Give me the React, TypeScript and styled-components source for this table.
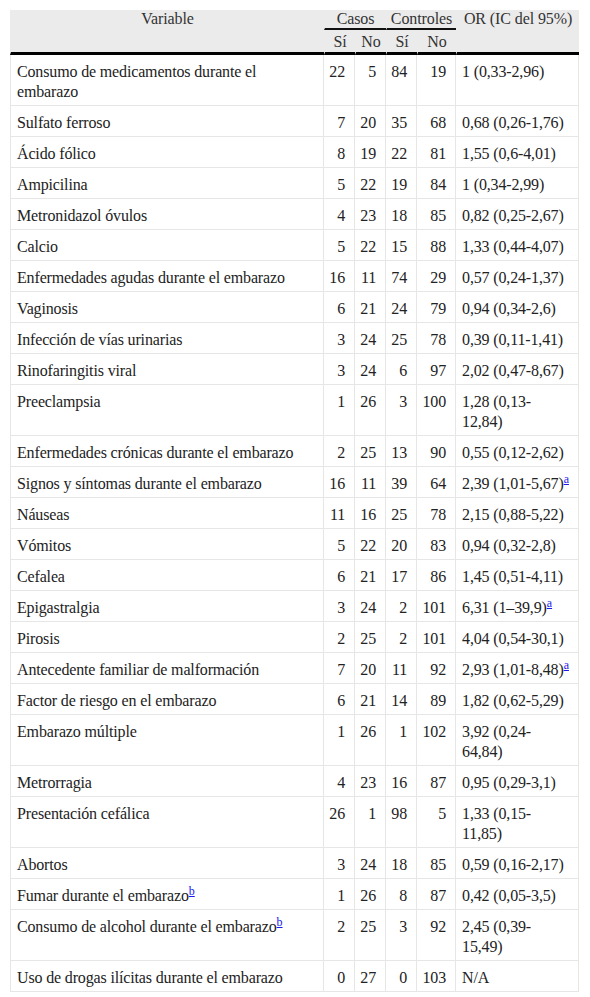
import React from 'react';
import styled, { createGlobalStyle } from 'styled-components';

/*
 * Types
*/
type Row = {
    variable: string;
    note?: string;
    casosSi: number;
    casosNo: number;
    controlesSi: number;
    controlesNo: number;
    or: string;
    orNote?: string;
};

/*
 * Data
*/
const rows: Row[] = [
    { variable: 'Consumo de medicamentos durante el embarazo', casosSi: 22, casosNo: 5, controlesSi: 84, controlesNo: 19, or: '1 (0,33-2,96)' },
    { variable: 'Sulfato ferroso', casosSi: 7, casosNo: 20, controlesSi: 35, controlesNo: 68, or: '0,68 (0,26-1,76)' },
    { variable: 'Ácido fólico', casosSi: 8, casosNo: 19, controlesSi: 22, controlesNo: 81, or: '1,55 (0,6-4,01)' },
    { variable: 'Ampicilina', casosSi: 5, casosNo: 22, controlesSi: 19, controlesNo: 84, or: '1 (0,34-2,99)' },
    { variable: 'Metronidazol óvulos', casosSi: 4, casosNo: 23, controlesSi: 18, controlesNo: 85, or: '0,82 (0,25-2,67)' },
    { variable: 'Calcio', casosSi: 5, casosNo: 22, controlesSi: 15, controlesNo: 88, or: '1,33 (0,44-4,07)' },
    { variable: 'Enfermedades agudas durante el embarazo', casosSi: 16, casosNo: 11, controlesSi: 74, controlesNo: 29, or: '0,57 (0,24-1,37)' },
    { variable: 'Vaginosis', casosSi: 6, casosNo: 21, controlesSi: 24, controlesNo: 79, or: '0,94 (0,34-2,6)' },
    { variable: 'Infección de vías urinarias', casosSi: 3, casosNo: 24, controlesSi: 25, controlesNo: 78, or: '0,39 (0,11-1,41)' },
    { variable: 'Rinofaringitis viral', casosSi: 3, casosNo: 24, controlesSi: 6, controlesNo: 97, or: '2,02 (0,47-8,67)' },
    { variable: 'Preeclampsia', casosSi: 1, casosNo: 26, controlesSi: 3, controlesNo: 100, or: '1,28 (0,13-12,84)' },
    { variable: 'Enfermedades crónicas durante el embarazo', casosSi: 2, casosNo: 25, controlesSi: 13, controlesNo: 90, or: '0,55 (0,12-2,62)' },
    { variable: 'Signos y síntomas durante el embarazo', casosSi: 16, casosNo: 11, controlesSi: 39, controlesNo: 64, or: '2,39 (1,01-5,67)', orNote: 'a' },
    { variable: 'Náuseas', casosSi: 11, casosNo: 16, controlesSi: 25, controlesNo: 78, or: '2,15 (0,88-5,22)' },
    { variable: 'Vómitos', casosSi: 5, casosNo: 22, controlesSi: 20, controlesNo: 83, or: '0,94 (0,32-2,8)' },
    { variable: 'Cefalea', casosSi: 6, casosNo: 21, controlesSi: 17, controlesNo: 86, or: '1,45 (0,51-4,11)' },
    { variable: 'Epigastralgia', casosSi: 3, casosNo: 24, controlesSi: 2, controlesNo: 101, or: '6,31 (1–39,9)', orNote: 'a' },
    { variable: 'Pirosis', casosSi: 2, casosNo: 25, controlesSi: 2, controlesNo: 101, or: '4,04 (0,54-30,1)' },
    { variable: 'Antecedente familiar de malformación', casosSi: 7, casosNo: 20, controlesSi: 11, controlesNo: 92, or: '2,93 (1,01-8,48)', orNote: 'a' },
    { variable: 'Factor de riesgo en el embarazo', casosSi: 6, casosNo: 21, controlesSi: 14, controlesNo: 89, or: '1,82 (0,62-5,29)' },
    { variable: 'Embarazo múltiple', casosSi: 1, casosNo: 26, controlesSi: 1, controlesNo: 102, or: '3,92 (0,24-64,84)' },
    { variable: 'Metrorragia', casosSi: 4, casosNo: 23, controlesSi: 16, controlesNo: 87, or: '0,95 (0,29-3,1)' },
    { variable: 'Presentación cefálica', casosSi: 26, casosNo: 1, controlesSi: 98, controlesNo: 5, or: '1,33 (0,15-11,85)' },
    { variable: 'Abortos', casosSi: 3, casosNo: 24, controlesSi: 18, controlesNo: 85, or: '0,59 (0,16-2,17)' },
    { variable: 'Fumar durante el embarazo', note: 'b', casosSi: 1, casosNo: 26, controlesSi: 8, controlesNo: 87, or: '0,42 (0,05-3,5)' },
    { variable: 'Consumo de alcohol durante el embarazo', note: 'b', casosSi: 2, casosNo: 25, controlesSi: 3, controlesNo: 92, or: '2,45 (0,39-15,49)' },
    { variable: 'Uso de drogas ilícitas durante el embarazo', casosSi: 0, casosNo: 27, controlesSi: 0, controlesNo: 103, or: 'N/A' },
];

/*
 * Styling
*/
const GlobalStyle = createGlobalStyle`
    body {
        margin: 0;
        background: #ffffff;
        font-family: "Liberation Serif", "Times New Roman", serif;
    }
`;

const Wrapper = styled.div`
    padding: 10px 11px 10px 10px;
`;

const Table = styled.table`
    width: 569px;
    table-layout: fixed;
    border-collapse: separate;
    border-spacing: 0;
    font-family: "Liberation Serif", "Times New Roman", serif;
    font-size: 16px;
    line-height: 20px;
    color: #222222;
`;

const HeadCell = styled.th<{ $line?: 'thin' | 'thick'; $lower?: boolean }>`
    background: #ebebeb;
    color: #333333;
    font-weight: normal;
    text-align: center;
    vertical-align: top;
    padding: ${(p) => (p.$lower ? '3px 0 1px' : '0')};
    line-height: 18px;
    height: 18px;
    border-left: 1px solid transparent;
    border-bottom: ${(p) => (p.$line === 'thick' ? '3px solid #000000' : p.$line === 'thin' ? '2px solid #111111' : 'none')};
    white-space: nowrap;
    letter-spacing: -0.1px;
`;

const Cell = styled.td<{ $num?: boolean }>`
    vertical-align: top;
    padding: ${(p) => (p.$num ? '7px 9px 3px 0' : '7px 8px 3px 6px')};
    text-align: ${(p) => (p.$num ? 'right' : 'left')};
    letter-spacing: -0.15px;
    border-right: 1px solid #e6e6e6;
    border-bottom: 1px solid #e6e6e6;

    &:first-child {
        border-left: 1px solid #e6e6e6;
    }
`;

const NoteLink = styled.a`
    font-size: 12px;
    line-height: 0;
    vertical-align: 6px;
    letter-spacing: 0;
    color: #1a1aee;
    text-decoration: underline;
`;

/*
 * Component
*/
const App: React.FC = () => {
    return (
        <>
            <GlobalStyle />
            <Wrapper>
                <Table>
                    <colgroup>
                        <col style={{ width: 314 }} />
                        <col style={{ width: 31 }} />
                        <col style={{ width: 31 }} />
                        <col style={{ width: 31 }} />
                        <col style={{ width: 39 }} />
                        <col style={{ width: 123 }} />
                    </colgroup>
                    <thead>
                        <tr>
                            <HeadCell rowSpan={2} $line="thick">Variable</HeadCell>
                            <HeadCell colSpan={2} $line="thin">Casos</HeadCell>
                            <HeadCell colSpan={2} $line="thin">Controles</HeadCell>
                            <HeadCell rowSpan={2} $line="thick">OR (IC del 95%)</HeadCell>
                        </tr>
                        <tr>
                            <HeadCell $line="thick" $lower>Sí</HeadCell>
                            <HeadCell $line="thick" $lower>No</HeadCell>
                            <HeadCell $line="thick" $lower>Sí</HeadCell>
                            <HeadCell $line="thick" $lower>No</HeadCell>
                        </tr>
                    </thead>
                    <tbody>
                        {rows.map((row) => (
                            <tr key={row.variable}>
                                <Cell>
                                    {row.variable}
                                    {row.note && <NoteLink href="#">{row.note}</NoteLink>}
                                </Cell>
                                <Cell $num>{row.casosSi}</Cell>
                                <Cell $num>{row.casosNo}</Cell>
                                <Cell $num>{row.controlesSi}</Cell>
                                <Cell $num>{row.controlesNo}</Cell>
                                <Cell>
                                    {row.or}
                                    {row.orNote && <NoteLink href="#">{row.orNote}</NoteLink>}
                                </Cell>
                            </tr>
                        ))}
                    </tbody>
                </Table>
            </Wrapper>
        </>
    );
};

export default App;
